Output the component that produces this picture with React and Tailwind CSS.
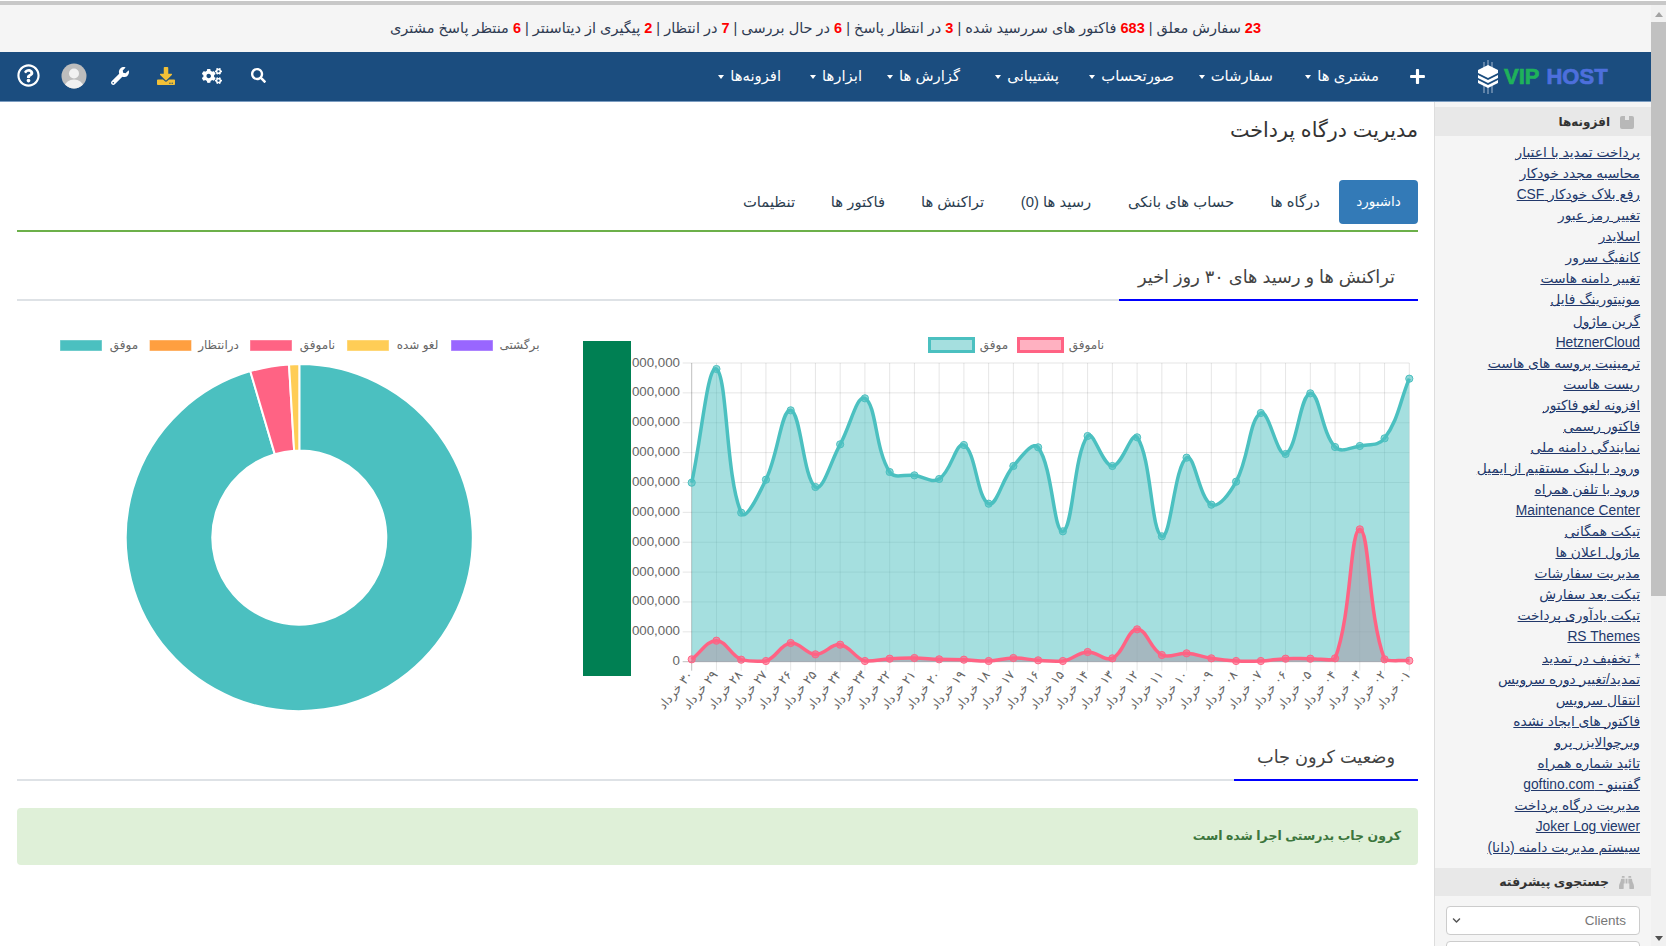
import { FaBinoculars, FaChevronDown, FaCogs, FaDownload, FaPlus, FaRegQuestionCircle, FaSearch, FaWrench } from "react-icons/fa";

const TOP_STATS = [
  ["23", "سفارش معلق"],
  ["683", "فاکتور های سررسید شده"],
  ["3", "در انتظار پاسخ"],
  ["6", "در حال بررسی"],
  ["7", "در انتظار"],
  ["2", "پیگیری از دیتاسنتر"],
  ["6", "منتظر پاسخ مشتری"],
];

const NAV_ITEMS = [
  ["مشتری ها", "w-[106px]"],
  ["سفارشات", "w-[99px]"],
  ["صورتحساب", "w-[115px]"],
  ["پشتیبانی", "w-[99px]"],
  ["گزارش ها", "w-[98px]"],
  ["ابزارها", "w-[81px]"],
  ["افزونه‌ها", "w-[70px]"],
];

const TABS = [
  ["درگاه ها", "w-[88px]"],
  ["حساب های بانکی", "w-[140px]"],
  ["رسید ها (0)", "w-[110px]"],
  ["تراکنش ها", "w-[97px]"],
  ["فاکتور ها", "w-[92px]"],
  ["تنظیمات", "w-[86px]"],
];

const ADDONS = [
  "پرداخت تمدید با اعتبار", "محاسبه مجدد خودکار", "رفع بلاک خودکار CSF", "تغییر رمز عبور", "اسلایدر", "کانفیگ سرور",
  "تغییر دامنه هاست", "مونیتورینگ فایل", "گرین ماژول", "HetznerCloud", "ترمینیت پروسه های هاست", "ریست هاست",
  "افزونه لغو فاکتور", "فاکتور رسمی", "نمایندگی دامنه ملی", "ورود با لینک مستقیم از ایمیل", "ورود با تلفن همراه",
  "Maintenance Center", "تیکت همگانی", "ماژول اعلان ها", "مدیریت سفارشات", "تیکت بعد سفارش", "تیکت یادآوری پرداخت",
  "RS Themes", "* تخفیف در تمدید", "تمدید/تغییر دوره سرویس", "انتقال سرویس", "فاکتور های ایجاد نشده", "ویرچوالایزر پرو",
  "تائید شماره همراه", "گفتینو - goftino.com", "مدیریت درگاه پرداخت", "Joker Log viewer", "سیستم مدیریت دامنه (دانا)",
];

// chart readings, y in px inside the svg
const SUCCESS = [458, 117, 548, 449, 241, 471, 343, 205, 426, 436, 447, 345, 521, 408, 352, 604, 318, 408, 322, 619, 383, 524, 455, 249, 372, 190, 351, 348, 325, 146].map((v) => v / 3);
const FAILED = [988, 932, 989, 993, 939, 973, 944, 993, 986, 984, 988, 989, 993, 984, 991, 993, 966, 985, 898, 975, 970, 985, 993, 993, 986, 986, 985, 598, 988, 992].map((v) => v / 3);
const DAYS = ["۳۰", "۲۹", "۲۸", "۲۷", "۲۶", "۲۵", "۲۴", "۲۳", "۲۲", "۲۱", "۲۰", "۱۹", "۱۸", "۱۷", "۱۶", "۱۵", "۱۴", "۱۳", "۱۲", "۱۱", "۱۰", "۰۹", "۰۸", "۰۷", "۰۶", "۰۵", "۰۴", "۰۳", "۰۲", "۰۱"];

const LEFT = 108.7;
const RIGHT = 826.3;
const TOP = 33;
const BOTTOM = 331.7;
const STEP = (RIGHT - LEFT) / 29;

const clamp = (v, a, b) => Math.min(b, Math.max(a, v));

// same spline chart.js uses, tension 0.4
function splinePath(values) {
  const pts = values.map((y, i) => ({ x: LEFT + i * STEP, y }));
  let d = `M${pts[0].x} ${pts[0].y}`;
  const ctrl = (i) => {
    const p = pts[i - 1] || pts[i];
    const c = pts[i];
    const n = pts[i + 1] || pts[i];
    const d1 = Math.hypot(c.x - p.x, c.y - p.y);
    const d2 = Math.hypot(n.x - c.x, n.y - c.y);
    const s1 = d1 / (d1 + d2 || 1);
    const s2 = d2 / (d1 + d2 || 1);
    return {
      px: clamp(c.x - 0.4 * s1 * (n.x - p.x), LEFT, RIGHT),
      py: clamp(c.y - 0.4 * s1 * (n.y - p.y), TOP, BOTTOM),
      nx: clamp(c.x + 0.4 * s2 * (n.x - p.x), LEFT, RIGHT),
      ny: clamp(c.y + 0.4 * s2 * (n.y - p.y), TOP, BOTTOM),
    };
  };
  for (let i = 1; i < pts.length; i++) {
    const a = ctrl(i - 1);
    const b = ctrl(i);
    d += ` C${a.nx} ${a.ny} ${b.px} ${b.py} ${pts[i].x} ${pts[i].y}`;
  }
  return d;
}

const successLine = splinePath(SUCCESS);
const failedLine = splinePath(FAILED);
const areaEnd = ` L${RIGHT} ${BOTTOM} L${LEFT} ${BOTTOM} Z`;

function LineChart() {
  return (
    <svg width="835" height="400" direction="ltr" className="block" fontFamily="'Liberation Sans', 'DejaVu Sans', sans-serif">
      {Array.from({ length: 11 }, (_, i) => {
        const y = TOP + (i * (BOTTOM - TOP)) / 10;
        return (
          <g key={i}>
            <line x1={LEFT - 9} x2={RIGHT} y1={y} y2={y} stroke={i === 10 ? "rgba(0,0,0,0.25)" : "rgba(0,0,0,0.1)"} />
            <text x="97" y={y + 3.5} textAnchor="end" fontSize="13.3" fill="#666">{i === 10 ? "0" : "000,000"}</text>
          </g>
        );
      })}
      {DAYS.map((day, i) => (
        <g key={day}>
          <line x1={LEFT + i * STEP} x2={LEFT + i * STEP} y1={TOP} y2={BOTTOM + 9} stroke={i === 0 ? "rgba(0,0,0,0.25)" : "rgba(0,0,0,0.1)"} />
          <text
            transform={`translate(${LEFT + i * STEP + 2} 345) rotate(-50)`}
            direction="rtl"
            textAnchor="start"
            fontSize="12.5"
            fill="#666"
          >
            {day} خرداد
          </text>
        </g>
      ))}
      <path d={failedLine + areaEnd} fill="rgba(255,99,132,0.5)" />
      <path d={successLine + areaEnd} fill="rgba(75,192,192,0.5)" />
      <path d={successLine} fill="none" stroke="#4bc0c0" strokeWidth="3.5" />
      {SUCCESS.map((y, i) => (
        <circle key={i} cx={LEFT + i * STEP} cy={y} r="3.6" fill="rgba(75,192,192,0.6)" stroke="#4bc0c0" />
      ))}
      <path d={failedLine} fill="none" stroke="#ff6384" strokeWidth="3.5" />
      {FAILED.map((y, i) => (
        <circle key={i} cx={LEFT + i * STEP} cy={y} r="3.6" fill="rgba(255,99,132,0.6)" stroke="#ff6384" />
      ))}
      <rect x="346.5" y="8.5" width="44" height="13" fill="rgba(75,192,192,0.5)" stroke="#4bc0c0" strokeWidth="3" />
      <text x="411" y="18.5" textAnchor="middle" fontSize="12" fill="#666">موفق</text>
      <rect x="435.5" y="8.5" width="44" height="13" fill="rgba(255,99,132,0.5)" stroke="#ff6384" strokeWidth="3" />
      <text x="503.5" y="18.5" textAnchor="middle" fontSize="12" fill="#666">ناموفق</text>
    </svg>
  );
}

const CX = 282.3;
const CY = 207.6;

function slice(from, to, color) {
  const R = 173.5;
  const r = 87;
  const pt = (rad, deg) => {
    const a = ((deg - 90) * Math.PI) / 180;
    return `${CX + rad * Math.cos(a)} ${CY + rad * Math.sin(a)}`;
  };
  const big = to - from > 180 ? 1 : 0;
  return (
    <path
      key={color}
      d={`M${pt(R, from)} A${R} ${R} 0 ${big} 1 ${pt(R, to)} L${pt(r, to)} A${r} ${r} 0 ${big} 0 ${pt(r, from)} Z`}
      fill={color}
      stroke="#fff"
      strokeWidth="2"
    />
  );
}

const DONUT_LEGEND = [
  ["موفق", "#4bc0c0", 43, 107],
  ["درانتظار", "#ff9f40", 132.5, 201.5],
  ["ناموفق", "#ff6384", 233, 300.5],
  ["لغو شده", "#ffcd56", 330, 400.5],
  ["برگشتی", "#9966ff", 434, 502.5],
];

function DonutChart() {
  return (
    <svg width="566" height="400" direction="ltr" className="block" fontFamily="'Liberation Sans', 'DejaVu Sans', sans-serif">
      {DONUT_LEGEND.map(([label, color, box, mid]) => (
        <g key={label}>
          <rect x={box} y="10" width="42" height="11" fill={color} stroke="#fff" strokeOpacity="0.4" />
          <text x={mid} y="18.5" textAnchor="middle" fontSize="12" fill="#666">{label}</text>
        </g>
      ))}
      {slice(0, 343.6, "#4bc0c0")}
      {slice(343.6, 356.6, "#ff6384")}
      {slice(356.6, 360, "#ffcd56")}
    </svg>
  );
}

function Logo() {
  return (
    <div dir="ltr" className="flex items-center w-[133px]">
      <svg width="24" height="34" viewBox="0 0 24 34" className="mr-[4px]">
        <g stroke="#c9d6e6" strokeWidth="0.8">
          <line x1="8" y1="2" x2="8" y2="12" />
          <line x1="12" y1="0" x2="12" y2="11" />
          <line x1="16" y1="2" x2="16" y2="12" />
          <line x1="8" y1="25" x2="8" y2="33" />
          <line x1="12" y1="27" x2="12" y2="34" />
          <line x1="16" y1="25" x2="16" y2="33" />
        </g>
        <g fill="#fff">
          <path d="M2 10 L12 5 L22 10 L22 13 L12 18 L2 13 Z" />
          <path d="M2 15 L12 20 L22 15 L22 18 L12 23 L2 18 Z" />
          <path d="M2 20 L12 25 L22 20 L22 23 L12 28 L2 23 Z" />
        </g>
      </svg>
      <span className="text-[22px] font-bold text-[#1fb25a] leading-none [-webkit-text-stroke:0.7px_#1fb25a]">VIP</span>
      <span className="ml-[7px] text-[22px] font-bold text-[#4d6fdc] leading-none [-webkit-text-stroke:0.7px_#4d6fdc]">HOST</span>
    </div>
  );
}

function Avatar() {
  return (
    <svg width="26" height="26" viewBox="0 0 26 26">
      <defs>
        <clipPath id="avatarClip">
          <circle cx="13" cy="13" r="12.5" />
        </clipPath>
      </defs>
      <circle cx="13" cy="13" r="12.5" fill="#bdbdbd" />
      <g clipPath="url(#avatarClip)" fill="#f1f1f1">
        <circle cx="13" cy="10.5" r="5" />
        <ellipse cx="13" cy="23" rx="9" ry="6.5" />
      </g>
    </svg>
  );
}

function SectionHead({ title, width }) {
  return (
    <div className="flex h-[45px] border-b-2 border-[#dee2e6]">
      <div className={`${width} -mb-[2px] border-b-2 border-[#0000ff] pr-[23px] pt-[8px] text-[17.8px] leading-[26px] text-[#444]`}>
        {title}
      </div>
    </div>
  );
}

function SideHead({ icon, children, className }) {
  return (
    <div className={`flex items-center gap-[10px] pr-[17px] bg-[#e8e8e8] font-bold text-[#333] ${className}`}>
      {icon}
      <span>{children}</span>
    </div>
  );
}

export default function App() {
  return (
    <div className="h-[946px] w-[1666px] overflow-hidden bg-white [font-family:'Liberation_Sans','DejaVu_Sans',sans-serif]">
      <div className="h-[5px] border-t border-white bg-[#c8c8c8]" />
      <div className="flex h-[941px]">
        <div className="w-[1651px]">
          {/* stats bar */}
          <div dir="rtl" className="flex h-[47px] items-center justify-center bg-[#f5f5f5] pt-[1px] text-[14.5px] text-[#2f3b52]">
            {TOP_STATS.map(([count, label], i) => (
              <span key={i} className="whitespace-pre">
                {i > 0 && " | "}
                <b className="text-[#ff0000]">{count}</b> {label}
              </span>
            ))}
          </div>

          {/* nav */}
          <div dir="rtl" className="flex h-[50px] items-center border-b border-[#7a9cc0] bg-[#1b4d7f] pr-[42px] text-white">
            <Logo />
            <FaPlus className="mr-[50px] ml-[30px] text-[17px]" />
            {NAV_ITEMS.map(([label, width]) => (
              <div key={label} className={`${width} flex items-center gap-[6px] text-[14.8px] whitespace-nowrap`}>
                <span>{label}</span>
                <span className="border-x-[3.5px] border-t-[4px] border-x-transparent border-t-white" />
              </div>
            ))}
            <div dir="ltr" className="mr-auto -mt-[2px] flex items-center pl-[5px] text-[18px]">
              <div className="flex w-[46px] justify-center"><FaRegQuestionCircle className="text-[23px]" /></div>
              <div className="flex w-[46px] justify-center"><Avatar /></div>
              <div className="flex w-[46px] justify-center"><FaWrench /></div>
              <div className="flex w-[46px] justify-center"><FaDownload className="text-[#f2c037]" /></div>
              <div className="flex w-[46px] justify-center"><FaCogs className="text-[20px]" /></div>
              <div className="flex w-[46px] justify-center"><FaSearch className="text-[15px]" /></div>
            </div>
          </div>

          <div dir="rtl" className="flex h-[844px]">
            {/* addons sidebar */}
            <aside className="w-[217px] shrink-0 border-l border-[#ddd] bg-[#f5f5f5] pt-[5px] text-[#22386b]">
              <SideHead
                className="h-[29px] text-[12px]"
                icon={
                  <svg width="14" height="14" viewBox="0 0 14 14">
                    <path d="M2 1 H5 V5 H9 V1 H12 Q14 1 14 3 V12 Q14 14 12 14 H2 Q0 14 0 12 V3 Q0 1 2 1 Z" fill="#b8b8b8" />
                  </svg>
                }
              >
                افزونه‌ها
              </SideHead>
              <ul className="pt-[6px] pr-[11px]">
                {ADDONS.map((item) => (
                  <li key={item} className="text-[13.8px] leading-[21.06px] whitespace-nowrap underline">
                    {item}
                  </li>
                ))}
              </ul>
              <SideHead
                className="mt-[10px] h-[28px] text-[12.5px]"
                icon={<FaBinoculars className="text-[15px] text-[#b8b8b8]" />}
              >
                جستجوی پیشرفته
              </SideHead>
              <div className="mt-[10px] mr-[11px] flex h-[29px] w-[194px] items-center justify-between rounded border border-[#ccc] bg-white pr-[13px] pl-[5px] text-[13.5px] text-[#777]">
                <span>Clients</span>
                <FaChevronDown className="text-[9px] text-[#555]" />
              </div>
              <div className="mt-[6px] mr-[11px] h-[29px] w-[194px] rounded border border-[#ccc] bg-white" />
            </aside>

            {/* page */}
            <main className="flex-1 pr-[16px] pl-[17px] pt-[13px] text-[#2c3e50]">
              <h1 className="h-[30px] text-[20.7px] leading-[30px] text-[#333]">مدیریت درگاه پرداخت</h1>

              <div className="mt-[35px] flex h-[44px] items-center text-center text-[14.8px] whitespace-nowrap">
                <div className="flex h-[44px] w-[79px] items-center justify-center rounded bg-[#337ab7] text-[13.5px] text-white">داشبورد</div>
                {TABS.map(([label, width]) => (
                  <div key={label} className={width}>{label}</div>
                ))}
              </div>
              <div className="mt-[6px] h-[2px] bg-[#6cb04a]" />

              <div className="mt-[24px]">
                <SectionHead title="تراکنش ها و رسید های ۳۰ روز اخیر" width="w-[299px]" />
              </div>

              <div className="mt-[29px] flex h-[400px]">
                <div className="relative w-[835px] shrink-0">
                  <LineChart />
                  <div className="absolute top-[11px] left-0 h-[335px] w-[48px] bg-[#008053]" />
                </div>
                <div className="w-[566px] shrink-0">
                  <DonutChart />
                </div>
              </div>

              <div className="mt-[6px]">
                <SectionHead title="وضعیت کرون جاب" width="w-[184px]" />
              </div>

              <div className="mt-[27px] flex h-[57px] items-center rounded bg-[#dff0d8] pr-[17px] text-[12.5px] font-bold text-[#3c763d]">
                کرون جاب بدرستی اجرا شده است
              </div>
            </main>
          </div>
        </div>

        {/* scrollbar */}
        <div className="relative w-[15px] bg-[#f1f1f1]">
          <div className="absolute top-[7px] left-[4px] border-x-[4px] border-b-[5px] border-x-transparent border-b-[#a3a3a3]" />
          <div className="absolute top-[17px] left-0 h-[574px] w-[15px] bg-[#c1c1c1]" />
          <div className="absolute bottom-[5px] left-[4px] border-x-[4px] border-t-[5px] border-x-transparent border-t-[#505050]" />
        </div>
      </div>
    </div>
  );
}
